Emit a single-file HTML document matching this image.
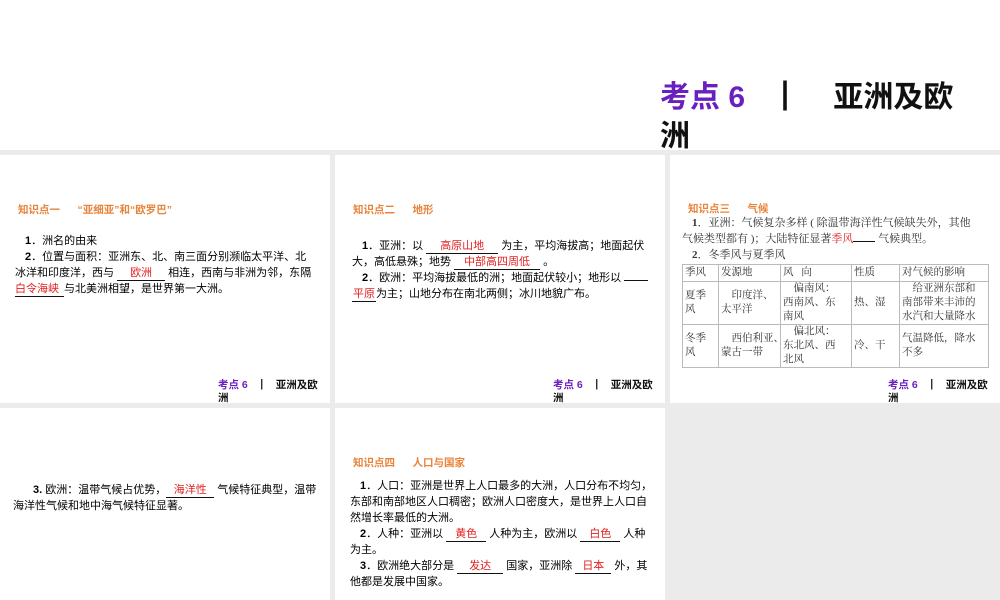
<!DOCTYPE html><html><head><meta charset="utf-8"><style>
*{margin:0;padding:0}
body{width:1000px;height:600px;background:#ebebeb;position:relative;overflow:hidden;font-family:"Liberation Sans","Noto Sans CJK SC",sans-serif;font-size:11px;color:#111}
.p{position:absolute;background:#fff}
.a{position:absolute;white-space:nowrap;line-height:16px}
.h{color:#e8833a;font-weight:bold;font-size:10.5px}
.b{font-weight:normal;color:#000}
.bl{display:inline-block;border-bottom:1px solid #111;text-align:center;color:#e02020;line-height:13px;vertical-align:baseline}
.f{position:absolute;font-size:10.5px;line-height:13px;font-weight:bold}
.f i{font-style:normal;color:#6a1fbf}
table{table-layout:fixed}
td{border:1px solid #bbb;font-family:"Liberation Serif","Noto Serif CJK SC",serif;font-size:10.5px;line-height:14px;padding:0 2px;vertical-align:middle;color:#333;white-space:nowrap;overflow:visible}
.s{font-family:'Liberation Serif','Noto Serif CJK SC',serif;font-size:11px;color:#333}
</style></head><body>
<div class="p" style="left:0;top:0;width:1000px;height:150px"></div>
<div class="a" style="left:660px;top:80px;font-size:30px;line-height:36px;font-weight:bold"><span style="color:#6a1fbf">考点 6</span>&nbsp;&nbsp;&nbsp;┃&nbsp;&nbsp;&nbsp;&nbsp;亚洲及欧</div>
<div class="a" style="left:660px;top:120px;font-size:30px;line-height:34px;font-weight:bold">洲</div>

<div class="p" style="left:0;top:155px;width:330px;height:248px"></div>
<div class="p" style="left:335px;top:155px;width:330px;height:248px"></div>
<div class="p" style="left:670px;top:155px;width:330px;height:248px"></div>
<div class="p" style="left:0;top:408px;width:330px;height:192px"></div>
<div class="p" style="left:335px;top:408px;width:330px;height:192px"></div>

<!-- panel 1 -->
<div class="a h" style="left:18px;top:202px">知识点一&nbsp;&nbsp;&nbsp;&nbsp;&nbsp;&nbsp;“亚细亚”和“欧罗巴”</div>
<div class="a b" style="left:25px;top:233px"><b>1</b>．洲名的由来</div>
<div class="a b" style="left:25px;top:249px"><b>2</b>．位置与面积：亚洲东、北、南三面分别濒临太平洋、北</div>
<div class="a b" style="left:15px;top:265px">冰洋和印度洋，西与 <span class="bl" style="width:48px">欧洲</span> 相连，西南与非洲为邻，东隔</div>
<div class="a b" style="left:15px;top:281px"><span class="bl" style="width:49px;text-align:left">白令海峡</span>与北美洲相望，是世界第一大洲。</div>
<div class="f" style="left:218px;top:379px"><i>考点 6</i>&nbsp;&nbsp;&nbsp;┃&nbsp;&nbsp;&nbsp;亚洲及欧<br>洲</div>

<!-- panel 2 -->
<div class="a h" style="left:353px;top:202px">知识点二&nbsp;&nbsp;&nbsp;&nbsp;&nbsp;&nbsp;地形</div>
<div class="a b" style="left:362px;top:238px"><b>1</b>．亚洲：以 <span class="bl" style="width:72px">高原山地</span> 为主，平均海拔高；地面起伏</div>
<div class="a b" style="left:352px;top:254px">大，高低悬殊；地势 <span class="bl" style="width:86px">中部高四周低</span> 。</div>
<div class="a b" style="left:362px;top:270px"><b>2</b>．欧洲：平均海拔最低的洲；地面起伏较小；地形以 <span class="bl" style="width:24px"></span></div>
<div class="a b" style="left:352px;top:286px"><span class="bl" style="width:24px">平原</span>为主；山地分布在南北两侧；冰川地貌广布。</div>
<div class="f" style="left:553px;top:379px"><i>考点 6</i>&nbsp;&nbsp;&nbsp;┃&nbsp;&nbsp;&nbsp;亚洲及欧<br>洲</div>

<!-- panel 3 -->
<div class="a h" style="left:688px;top:201px">知识点三&nbsp;&nbsp;&nbsp;&nbsp;&nbsp;&nbsp;气候</div>
<div class="a s" style="left:692px;top:215px"><b>1</b>．亚洲：气候复杂多样 ( 除温带海洋性气候缺失外，其他</div>
<div class="a s" style="left:682px;top:231px">气候类型都有 )；大陆特征显著<span style="color:#e02020">季风</span><span class="bl" style="width:22px"></span> 气候典型。</div>
<div class="a s" style="left:692px;top:247px"><b>2</b>．冬季风与夏季风</div>
<table style="position:absolute;left:682px;top:264px;border-collapse:collapse;width:306px">
<colgroup><col style="width:36px"><col style="width:62px"><col style="width:71px"><col style="width:48px"><col style="width:89px"></colgroup>
<tr style="height:17px"><td>季风</td><td>发源地</td><td>风&nbsp;&nbsp;&nbsp;向</td><td>性质</td><td>对气候的影响</td></tr>
<tr style="height:43px"><td>夏季<br>风</td><td>&nbsp;&nbsp;&nbsp;&nbsp;印度洋、<br>太平洋</td><td>&nbsp;&nbsp;&nbsp;&nbsp;偏南风：<br>西南风、东<br>南风</td><td>热、湿</td><td>&nbsp;&nbsp;&nbsp;&nbsp;给亚洲东部和<br>南部带来丰沛的<br>水汽和大量降水</td></tr>
<tr style="height:43px"><td>冬季<br>风</td><td>&nbsp;&nbsp;&nbsp;&nbsp;西伯利亚、<br>蒙古一带</td><td>&nbsp;&nbsp;&nbsp;&nbsp;偏北风：<br>东北风、西<br>北风</td><td>冷、干</td><td>气温降低，降水<br>不多</td></tr>
</table>
<div class="f" style="left:888px;top:379px"><i>考点 6</i>&nbsp;&nbsp;&nbsp;┃&nbsp;&nbsp;&nbsp;亚洲及欧<br>洲</div>

<!-- panel 4 -->
<div class="a b" style="left:33px;top:482px"><b>3.</b> 欧洲：温带气候占优势，<span class="bl" style="width:48px">海洋性</span> 气候特征典型，温带</div>
<div class="a b" style="left:13px;top:498px">海洋性气候和地中海气候特征显著。</div>

<!-- panel 5 -->
<div class="a h" style="left:353px;top:455px">知识点四&nbsp;&nbsp;&nbsp;&nbsp;&nbsp;&nbsp;人口与国家</div>
<div class="a b" style="left:360px;top:478px"><b>1</b>．人口：亚洲是世界上人口最多的大洲，人口分布不均匀，</div>
<div class="a b" style="left:350px;top:494px">东部和南部地区人口稠密；欧洲人口密度大，是世界上人口自</div>
<div class="a b" style="left:350px;top:510px">然增长率最低的大洲。</div>
<div class="a b" style="left:360px;top:526px"><b>2</b>．人种：亚洲以 <span class="bl" style="width:40px">黄色</span> 人种为主，欧洲以 <span class="bl" style="width:40px">白色</span> 人种</div>
<div class="a b" style="left:350px;top:542px">为主。</div>
<div class="a b" style="left:360px;top:558px"><b>3</b>．欧洲绝大部分是 <span class="bl" style="width:46px">发达</span> 国家，亚洲除 <span class="bl" style="width:36px">日本</span> 外，其</div>
<div class="a b" style="left:350px;top:574px">他都是发展中国家。</div>
</body></html>
